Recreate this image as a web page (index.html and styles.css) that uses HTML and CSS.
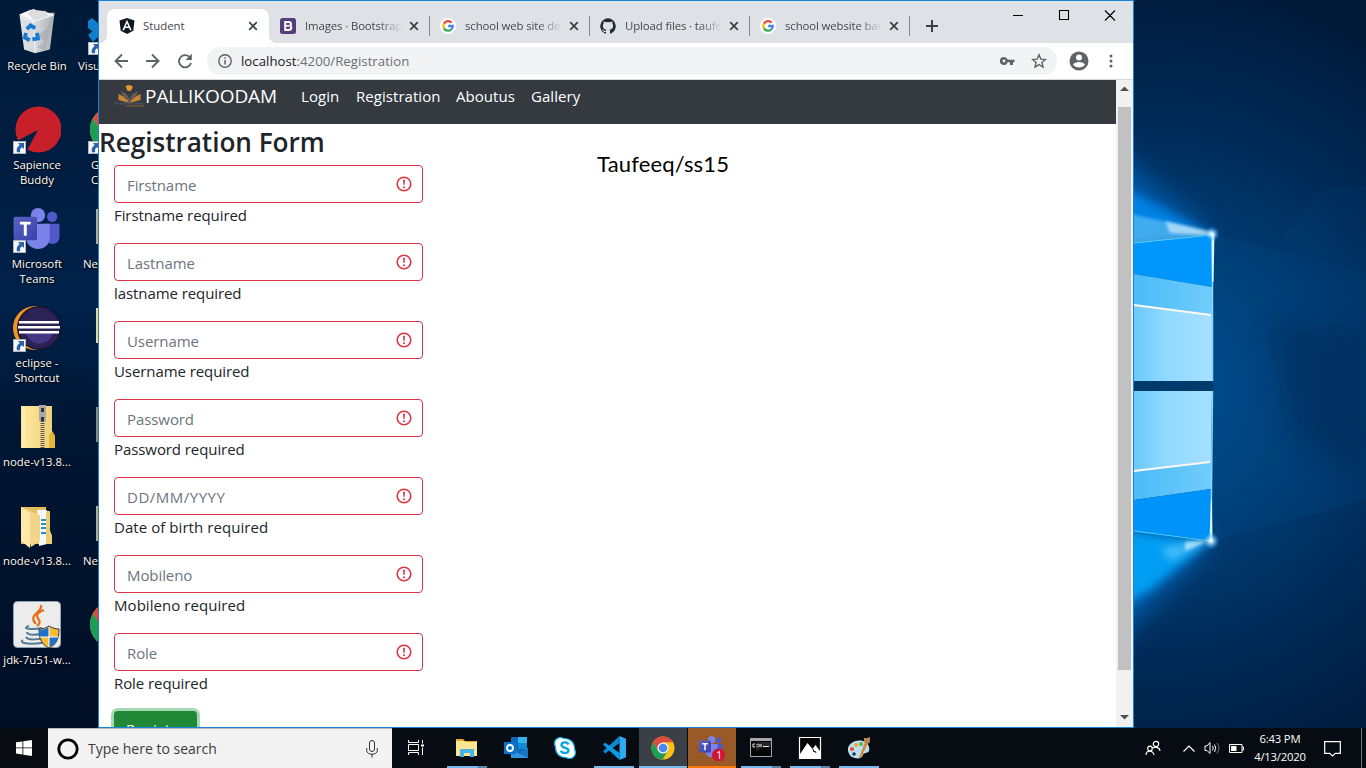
FILE: index.html
```html
<!DOCTYPE html>
<html lang="en">
<head>
<meta charset="utf-8">
<title>Student</title>
<link rel="stylesheet" href="styles.css">
</head>
<body>
<svg class="defs" width="0" height="0" aria-hidden="true">
  <defs>
    <linearGradient id="bin" x1="0" x2="1"><stop offset="0" stop-color="#e3e5e8"/><stop offset=".55" stop-color="#cfd2d6"/><stop offset="1" stop-color="#a8acb2"/></linearGradient>
    <linearGradient id="fold" x1="0" x2="1"><stop offset="0" stop-color="#ffe9a3"/><stop offset="1" stop-color="#efcf73"/></linearGradient>
    <linearGradient id="tm" x1="0" y1="0" x2="1" y2="1"><stop offset="0" stop-color="#5a62c3"/><stop offset="1" stop-color="#3940ab"/></linearGradient>
  </defs>
  <symbol id="shortcut" viewBox="0 0 13 13"><path d="M0 0h13v13H0z" fill="#aeb4bc"/><path d="M1 1h11v11H1z" fill="#f6f8fa"/><path d="M5 2h6v6L9 6.300C7 7.500 6.800 9 7.200 11.200H4C3 8.500 4 5.500 6.700 4z" fill="#2d62a8"/></symbol>
  <symbol id="vscode" viewBox="0 0 24 24"><path d="M1 15.200 17.500 0v7L3.200 17.500z" fill="#0f86d0"/><path d="M1 8.500 3.200 6.700 17.500 17v7z" fill="#0a9be6"/><path d="M17.500 0 24 2.800v18.400L17.500 24z" fill="#2babf3"/></symbol>
  <symbol id="chrome" viewBox="0 0 24 24"><circle cx="12" cy="12" r="11.500" fill="#fbc116"/><path d="M2 6.300A11.500 11.500 0 0 1 22 6.300H12L7 15z" fill="#dd4b3e"/><path d="M2 6.300A11.500 11.500 0 0 0 11.500 23.500L17 14.800 12 17 7 14.800z" fill="#1c9d58"/><circle cx="12" cy="12" r="5.600" fill="#f5f5f5"/><circle cx="12" cy="12" r="4.300" fill="#4688f1"/></symbol>
  <symbol id="google" viewBox="0 0 16 16"><circle cx="8" cy="8" r="8" fill="#fff"/><g fill="none" stroke-width="2.300"><path d="M4 5.600A4.700 4.700 0 0 1 11.500 4.600" stroke="#ea4335"/><path d="M4 5.600a4.700 4.700 0 0 0 0 4.800" stroke="#fbbc05"/><path d="M4 10.400a4.700 4.700 0 0 0 7.200 1.100" stroke="#34a853"/><path d="M11.200 11.500A4.600 4.600 0 0 0 12.700 8H8.200" stroke="#4285f4"/></g></symbol>
  <symbol id="teams" viewBox="0 0 48 44"><circle cx="39.500" cy="9" r="5.300" fill="#5059c9"/><path d="M32 16h15v13c0 9-9 9-12 6z" fill="#5059c9"/><circle cx="25" cy="7.300" r="7.300" fill="#7b83eb"/><path d="M13 16h24v14c0 16-24 16-24 0z" fill="#7b83eb"/><rect y="9" width="24" height="24" rx="2" fill="url(#tm)"/><path d="M6.500 14h11v3h-4v11.500h-3V17h-4z" fill="#fff"/></symbol>
  <symbol id="alert" viewBox="0 0 16 16"><circle cx="8" cy="8" r="6.800" fill="none" stroke="#dc3545" stroke-width="1.600"/><path d="M7 3.800h2l-.4 5.200H7.400z" fill="#dc3545"/><circle cx="8" cy="11.300" r="1" fill="#dc3545"/></symbol>
  <symbol id="close" viewBox="0 0 10 10"><path d="M1.200 1.200l7.600 7.600M8.800 1.200 1.200 8.800" stroke="#3c4043" stroke-width="1.700"/></symbol>
</svg>

<main class="desktop">
  <svg class="wallpaper" viewBox="0 0 1366 768">
    <defs>
      <radialGradient id="sky" gradientUnits="userSpaceOnUse" cx="1150" cy="390" r="480"><stop offset="0" stop-color="#004c90"/><stop offset=".3" stop-color="#003d74"/><stop offset=".55" stop-color="#002b58"/><stop offset=".85" stop-color="#001a3a"/><stop offset="1" stop-color="#001936"/></radialGradient>
      <linearGradient id="leftbg" x2="0" y2="1"><stop offset="0" stop-color="#001a38"/><stop offset=".4" stop-color="#00214a"/><stop offset=".55" stop-color="#001634"/><stop offset="1" stop-color="#000d22"/></linearGradient>
      <linearGradient id="pane" x2="1"><stop offset="0" stop-color="#6cc9fb"/><stop offset=".4" stop-color="#90d9ff"/><stop offset="1" stop-color="#a6e0ff"/></linearGradient>
      <linearGradient id="band" x2="1"><stop offset="0" stop-color="#4abcf8"/><stop offset="1" stop-color="#70ccfa"/></linearGradient>
      <radialGradient id="spark"><stop offset="0" stop-color="#fff"/><stop offset=".25" stop-color="#c8f1ff" stop-opacity=".8"/><stop offset="1" stop-color="#0a90ff" stop-opacity="0"/></radialGradient>
      <filter id="wide" x="-50%" y="-50%" width="200%" height="200%"><feGaussianBlur stdDeviation="14"/></filter>
      <filter id="soft" x="-30%" y="-30%" width="160%" height="160%"><feGaussianBlur stdDeviation="5"/></filter>
      <filter id="fine" x="-20%" y="-20%" width="140%" height="140%"><feGaussianBlur stdDeviation="1.800"/></filter>
    </defs>
    <rect width="1366" height="768" fill="url(#sky)"/>
    <rect width="110" height="768" fill="url(#leftbg)"/>
    <path d="M1212 234 1366 273V500L1212 541z" fill="#0063b0" opacity=".12"/>
    <path d="M1366 187h-40l-42 45v20l82 22z" fill="#0063b0" opacity=".07"/>
    <path d="M1270 320 1366 335V480L1290 430z" fill="#001f44" opacity=".35" filter="url(#wide)"/>
    <path d="M1090 130 1212 234 1090 260z" fill="#0070d0" opacity=".6" filter="url(#wide)"/>
    <path d="M1090 515 1211 541 1090 665z" fill="#0078d8" opacity=".7" filter="url(#wide)"/>
    <path d="M1100 175 1212 234 1100 250z" fill="#0090f8" opacity=".75" filter="url(#soft)"/>
    <path d="M1100 207 1212 232v5l-112 14z" fill="#8adfff" opacity=".45" filter="url(#fine)"/>
    <path d="M1165 221 1212 232v4l-42-3z" fill="#e2f5ff" opacity=".6" filter="url(#fine)"/>
    <path d="M1100 528 1211 541 1150 590 1100 620z" fill="#00a8ff" opacity=".85" filter="url(#soft)"/>
    <path d="M1160 549 1211 540l-40 20z" fill="#a6e6ff" opacity=".5" filter="url(#soft)"/>
    <path d="M1185 542 1211 540l-26 11z" fill="#d6f2ff" opacity=".7" filter="url(#fine)"/>
    <path d="M1134 243 1212 235V287L1134 274z" fill="#0096fb"/>
    <path d="M1134 274 1212 287V315L1134 305z" fill="url(#band)"/>
    <path d="M1134 305 1212 315V381H1134z" fill="url(#pane)"/>
    <path d="M1134 391H1212L1211 462 1134 471z" fill="url(#pane)"/>
    <path d="M1134 471 1211 462V489L1134 500z" fill="url(#band)"/>
    <path d="M1134 500 1211 489V540L1134 531z" fill="#0094fa"/>
    <path d="M1134 381h79v10h-79z" fill="#003b6c"/>
    <path d="M1134 305 1211 315M1134 471 1210 462" stroke="#fff8f0" stroke-width="2.200" fill="none"/>
    <path d="M1134 243 1212 235M1134 531 1211 541" stroke="#50ceff" stroke-width="1" fill="none"/>
    <path d="M1212.500 234V381M1212.500 391 1211 541" stroke="#82d8ff" stroke-width="1.500"/>
    <path d="M1211.500 234h3l-1 48h-1.500zM1209.500 541h3l-.5-42h-1z" fill="#dcf9ff"/>
    <circle cx="1212" cy="234" r="8" fill="url(#spark)"/><circle cx="1211" cy="541" r="9" fill="url(#spark)"/>
  </svg>

  <section class="icons">
    <div class="item"><svg class="pic" viewBox="-1 -2 50 52"><path d="M5 6 17 1l12 4 14-1-5 40-16 4-12-4z" fill="url(#bin)"/><path d="M5 6l15 7 23-7-14-4-11-1z" fill="#f8f8f8"/><path d="m14 5 6-5 6 3 7-1 4 7-16 4z" fill="#ddd"/><path d="M20 13l2 34M6 9l14 5 22-7" stroke="#f8f8f8" fill="none"/><path d="m24 29 11-8 4-8-6 32-9-3 8-7z" fill="#9fa4aa" opacity=".5"/><g fill="none" stroke="#167bd0" stroke-width="4.200"><path d="m13 22 4-4 5 3"/><path d="m12 26-1 5 5 3"/><path d="m19 33 6-1-1-6"/></g></svg><span>Recycle Bin</span></div>
    <div class="item"><svg class="pic" viewBox="0 0 48 48"><circle cx="25.500" cy="23.500" r="23" fill="#c8202a"/><path d="M25 24 4 35l9 11z" fill="#001f45"/><use href="#shortcut" y="35" width="13" height="13"/></svg><span>Sapience<br>Buddy</span></div>
    <div class="item"><svg class="pic" viewBox="0 0 48 48"><use href="#teams" y="3" width="48" height="43"/><use href="#shortcut" y="35" width="13" height="13"/></svg><span>Microsoft<br>Teams</span></div>
    <div class="item"><svg class="pic" viewBox="0 0 48 48"><circle cx="22" cy="24" r="22" fill="#f7941e"/><circle cx="26" cy="24" r="22" fill="#17152e"/><circle cx="26" cy="24" r="20.500" fill="#2c2255"/><path d="M13 29h27c-4 14-23 14-27 0z" fill="#463686"/><path d="M6 17h40v2.500H6zm-1 5h42v2.500H5zm1 5h40v2.500H6z" fill="#fff"/><use href="#shortcut" y="35" width="13" height="13"/></svg><span>eclipse -<br>Shortcut</span></div>
    <div class="item"><svg class="pic" viewBox="0 0 48 48"><path d="M8 3h31v25l3 5v12H8z" fill="url(#fold)"/><path d="M36 45V32l3-4 3 5v12z" fill="#e3b63a"/><path d="M11 4v40" stroke="#fff4c9"/><path d="M29.500 14v31" stroke="#555" stroke-width="4" stroke-dasharray="1 1"/><path d="M26 2h7v16h-7z" fill="#a8a8a8"/><path d="M28 5h3v4h-3zM28 14h3v4h-3z" fill="#333"/></svg><span>node-v13.8...</span></div>
    <div class="item"><svg class="pic" viewBox="0 0 48 48"><path d="M8 5h25v4h4v20l2 5v8H8z" fill="#e3be5c"/><path d="M24 8h10v34l-8 2z" fill="#f5f8fc"/><path d="M28 18h5m-5 4h6m-6 4h5m-5 5h5" stroke="#278fcf" stroke-width="2"/><path d="M33 9h4v20l2 5v8h-6z" fill="#edcc76"/><path d="M8 5l19 8v26l-9 6z" fill="#f3d589"/><path d="M8 5l9 6v35l-9-7z" fill="#ffe8a8"/></svg><span>node-v13.8...</span></div>
    <div class="item"><svg class="pic" viewBox="0 0 48 48"><rect x=".5" y=".5" width="47" height="46" rx="4" fill="#ececec" stroke="#8ca2b6"/><path d="M28 4c2 8-14 9-5 19m8-14c-10 4-7 7-5 10s-1 5-2 6" stroke="#e76f1a" stroke-width="2.300" fill="none"/><path d="M16 25c-9 3 4 4 13 2M14 31c0 4 12 3 16 1M13 36c2 4 14 2 18 1M10 39c-8 5 24 5 23 0" stroke="#527b96" stroke-width="2" fill="none"/><path d="M26 28c4 0 7-1 10-3 3 2 7 3 10 3 0 10-3 16-10 19-7-3-10-9-10-19z" fill="#f6bb32" stroke="#33383e"/><path d="M36 26v10h-9c-1-2-1-5-1-7 4 0 7-1 10-3zM36 36h9c-1 5-4 8-9 10z" fill="#1e70c9"/><path d="M36 26v20M27 36h18" stroke="#fff"/></svg><span>jdk-7u51-w...</span></div>
  </section>
  <section class="icons second">
    <div class="item"><svg class="pic" viewBox="0 0 48 48"><path d="M0 14 4 11 20 25V36L0 21zM0 28l20-17v9L5 35z" fill="#1080cc"/><use href="#shortcut" y="35" width="13" height="13"/></svg><span class="n1">Visu</span></div>
    <div class="item"><svg class="pic" viewBox="0 0 48 48"><use href="#chrome" x="1" y="0" width="47" height="47"/><use href="#shortcut" y="35" width="13" height="13"/></svg><span class="n2">G<br>C</span></div>
    <div class="item"><svg class="pic" viewBox="0 0 48 48"><path d="M8 4h30v35H8z" fill="#b9ad85"/></svg><span class="n3">Ne</span></div>
    <div class="item"><svg class="pic" viewBox="0 0 48 48"><path d="M8 4h30v35H8z" fill="#efd58b"/></svg></div>
    <div class="item"><svg class="pic" viewBox="0 0 48 48"><path d="M8 4h30v35H8z" fill="#8b8873"/></svg></div>
    <div class="item"><svg class="pic" viewBox="0 0 48 48"><path d="M8 4h30v35H8z" fill="#b8ad82"/></svg><span class="n3">Ne</span></div>
    <div class="item"><svg class="pic" viewBox="0 0 48 48"><use href="#chrome" x="1" width="47" height="47"/></svg></div>
  </section>

  <section class="window">
    <header class="tabs">
      <div class="tab active"><svg class="fav" viewBox="0 0 16 16"><path d="M8 0 15.500 2.600 14.300 12.700 8 16 1.700 12.700.5 2.600z" fill="#101820"/><path d="M8 1.700 3.300 12.300h1.800l1-2.400h3.900l1 2.400h1.700zm0 3.500 1.400 3.200H6.600z" fill="#fff"/></svg><span>Student</span><svg class="x"><use href="#close"/></svg></div>
      <div class="tab"><svg class="fav" viewBox="0 0 16 16"><rect width="16" height="16" rx="2.500" fill="#563d7c"/><path d="M5.200 4h3.400c3 0 3 3.300 1 3.700 2.600.5 2.200 4.300-1 4.300H5.200z" fill="none" stroke="#fff" stroke-width="2"/><path d="M5 7.800h4" stroke="#fff" stroke-width="1.700"/></svg><span class="fade">Images · Bootstrap</span><svg class="x"><use href="#close"/></svg></div>
      <div class="tab"><svg class="fav"><use href="#google"/></svg><span class="fade">school web site de</span><svg class="x"><use href="#close"/></svg></div>
      <div class="tab"><svg class="fav" viewBox="0 0 16 16"><path d="M8 .2a8 8 0 0 0-2.500 15.500c.4.100.500-.2.500-.4v-1.400c-2.200.5-2.700-1-2.700-1-.4-.9-.9-1.200-.9-1.200-.7-.5.1-.5.100-.5.800.1 1.200.8 1.200.8.700 1.200 1.900.9 2.300.7.100-.5.300-.9.500-1.100-1.800-.2-3.600-.9-3.600-3.900 0-.9.300-1.600.8-2.200-.1-.2-.4-1 .1-2.100 0 0 .7-.2 2.200.8a7.500 7.500 0 0 1 4 0c1.500-1 2.200-.8 2.200-.8.500 1.100.2 1.900.1 2.100.5.600.8 1.300.8 2.200 0 3-1.900 3.700-3.600 3.900.3.300.5.800.5 1.500v2.200c0 .2.100.5.500.4A8 8 0 0 0 8 .2z" fill="#24292e"/></svg><span class="fade">Upload files · taufe</span><svg class="x"><use href="#close"/></svg></div>
      <div class="tab"><svg class="fav"><use href="#google"/></svg><span class="fade">school website bac</span><svg class="x"><use href="#close"/></svg></div>
      <svg class="plus" viewBox="0 0 12 12"><path d="M6 0v12M0 6h12" stroke="#3c4043" stroke-width="2"/></svg>
      <svg class="controls" viewBox="0 0 138 30"><path d="M17 15.500h10M63.500 10.500h9v9h-9zM109 10.500l10 10M119 10.500l-10 10" fill="none" stroke="#000" stroke-width="1.100"/></svg>
    </header>
    <div class="toolbar">
      <svg class="nav" viewBox="0 0 78 16" fill="none" stroke="#5f6368" stroke-width="1.900"><path d="M14 8H1.500M8 1.500 1.500 8 8 14.500M32 8h12.500M38 1.500 44.500 8 38 14.500"/><path d="M76 4.500A6.100 6.100 0 1 0 77 10"/><path d="M77.800.8V7h-6.300z" fill="#5f6368" stroke="none"/></svg>
      <div class="omnibox">
        <svg class="info" viewBox="0 0 14 14"><circle cx="7" cy="7" r="6.200" fill="none" stroke="#5f6368" stroke-width="1.400"/><path d="M6.300 6h1.500v4.500H6.300zM6.300 3.300h1.500v1.500H6.300z" fill="#5f6368"/></svg>
        <span class="url"><b>localhost</b>:4200/Registration</span>
        <svg class="key" viewBox="0 0 15 8"><path d="M4 0a4 4 0 1 0 3.700 5.300H10V8h3V5.300h1.500V2.700H7.700A4 4 0 0 0 4 0zm0 2.600a1.400 1.400 0 1 1 0 2.800 1.400 1.400 0 0 1 0-2.800z" fill="#5f6368"/></svg>
        <svg class="star" viewBox="0 0 16 16"><path d="m8 1.800 1.900 4.300 4.500.4-3.400 3 1 4.500-4-2.400L4 14l1-4.500-3.400-3 4.500-.4z" fill="none" stroke="#5f6368" stroke-width="1.400"/></svg>
      </div>
      <svg class="user" viewBox="0 0 20 20"><circle cx="10" cy="10" r="9.500" fill="#5f6368"/><circle cx="10" cy="6.500" r="3" fill="#fff"/><path d="M4 13.500c2-3.500 10-3.500 12 0-2.500 4-9.500 4-12 0z" fill="#fff"/></svg>
      <svg class="dots" viewBox="0 0 4 14"><circle cx="2" cy="2" r="1.500"/><circle cx="2" cy="7" r="1.500"/><circle cx="2" cy="12" r="1.500"/></svg>
    </div>
    <div class="viewport">
      <div class="page">
        <nav class="navbar">
          <svg class="logo" viewBox="0 0 30 24"><path d="M11 2l3-1 4 1v2l-2 3h-3z" fill="#e8962e"/><path d="M4 10l8 4 3 5-11-3zM26 10l-8 4-3 5 11-3z" fill="#c98635"/><path d="M6 7l6 3 3 5 3-5 6-3-3 6-6 5-6-5z" fill="#665c51"/><path d="M0 19.500h30" stroke="#4d5359" stroke-width="2" stroke-dasharray="2 .7"/><path d="M11 22h19" stroke="#835c32" stroke-width="1.500" stroke-dasharray="2 .6"/></svg>
          <span class="brand">PALLIKOODAM</span>
          <a class="l1">Login</a><a class="l2">Registration</a><a class="l3">Aboutus</a><a class="l4">Gallery</a>
        </nav>
        <h3>Registration Form</h3>
        <form class="form">
          <div class="group"><div class="input">Firstname<svg><use href="#alert"/></svg></div><p>Firstname required</p></div>
          <div class="group"><div class="input">Lastname<svg><use href="#alert"/></svg></div><p>lastname required</p></div>
          <div class="group"><div class="input">Username<svg><use href="#alert"/></svg></div><p>Username required</p></div>
          <div class="group"><div class="input">Password<svg><use href="#alert"/></svg></div><p>Password required</p></div>
          <div class="group"><div class="input date-input">DD/MM/YYYY<svg><use href="#alert"/></svg></div><p class="wider">Date of birth required</p></div>
          <div class="group"><div class="input">Mobileno<svg><use href="#alert"/></svg></div><p class="wider">Mobileno required</p></div>
          <div class="group"><div class="input">Role<svg><use href="#alert"/></svg></div><p>Role required</p></div>
          <div class="register">Register</div>
        </form>
        <span class="note">Taufeeq/ss15</span>
      </div>
      <div class="scrollbar"><svg viewBox="0 0 9 5"><path d="M0 5 4.500.5 9 5z"/></svg><i></i><svg viewBox="0 0 9 5"><path d="M0 0 4.500 4.500 9 0z"/></svg></div>
    </div>
  </section>

  <footer class="taskbar">
    <div class="start"><svg viewBox="0 0 16 16"><path d="M0 2.300 6.500 1.400v6.100H0zM7.300 1.300 16 0v7.500H7.300zM0 8.300h6.500v6.200L0 13.600zM7.300 8.300H16V16l-8.700-1.300z" fill="#fff"/></svg></div>
    <div class="search"><svg class="ring" viewBox="0 0 22 22"><circle cx="11" cy="11" r="9.200" fill="none" stroke="#000" stroke-width="2.800"/></svg><span>Type here to search</span><svg class="mic" viewBox="0 0 12 18" fill="none" stroke="#333"><rect x="3.500" y=".5" width="5" height="11" rx="2.500"/><path d="M.7 8v2.500c0 5 10.600 5 10.600 0V8M6 14v3.500"/></svg></div>
    <div class="task view"><svg class="i18" viewBox="0 0 18 18" fill="none" stroke="#fff"><path d="M1.500 1v2.500h10V1M1.500 5.500h10v6h-10zM1.500 16v-2.500h10V16M15.500 1v15"/><path d="M13.500 5h4v3h-4z" fill="#fff" stroke="#070b10"/></svg></div>
    <div class="task open multi"><svg class="i24" viewBox="0 0 24 24"><path d="M1 4V3h7l2 2h12v2H1z" fill="#e7a928"/><path d="M1 5h8l1 1h12v14H1z" fill="#ffe592"/><path d="M5 21v-8h14v8h-4v-4H9v4z" fill="#43b6e6"/></svg></div>
    <div class="task"><svg class="i24" viewBox="0 0 24 24"><path d="M7 1h16v15H7z" fill="#1068b7"/><path d="M14 1h9v6h-9z" fill="#32b4ef"/><path d="M14 7h9v6h-9z" fill="#138bd3"/><path d="M7 22V12l8 5 9-5v10z" fill="#3095df"/><path d="M14 17l10-5v10z" fill="#1b73c3"/><rect y="6" width="12" height="12" fill="#0872cb"/><circle cx="6" cy="12" r="3" fill="none" stroke="#fff" stroke-width="1.800"/></svg></div>
    <div class="task"><svg class="i24" viewBox="0 0 24 24"><g fill="#fff" stroke="#00aff0" stroke-width="1.200"><circle cx="7.500" cy="7.500" r="6"/><circle cx="16.500" cy="16.500" r="6"/><circle cx="12" cy="12" r="9.500"/></g><circle cx="8" cy="8" r="5.500" fill="#fff"/><circle cx="16" cy="16" r="5.500" fill="#fff"/><path d="M15.500 8.500c-1-2.800-7-2.800-7 .5 0 3.500 7 2.300 7 5.500 0 3.500-7 3-7.500.3" fill="none" stroke="#00a5e7" stroke-width="2.300"/></svg></div>
    <div class="task open"><svg class="i24"><use href="#vscode"/></svg></div>
    <div class="task open focused"><svg class="i24"><use href="#chrome"/></svg></div>
    <div class="task open attention"><svg class="i26" viewBox="0 0 26 26"><use href="#teams" y="1" width="24" height="22"/><circle cx="19.500" cy="20" r="6.500" fill="#d41035"/></svg><em>1</em></div>
    <div class="task open multi"><svg class="i24" viewBox="0 0 24 24"><path d="M1 2h22v19H1z" fill="#a6a6a6"/><path d="M2 5h20v15H2z" fill="#050505"/><path d="M7 6h15v5c-7 0-11 1-15 4z" fill="#262626"/><path d="M4 8h2M4 8v3h2M8 8v1m0 1v1M10 8v3m2-3v3M14 10.500h6" stroke="#eee" fill="none"/></svg></div>
    <div class="task open multi"><svg class="i24" viewBox="0 0 24 24"><path d="M1.500 1.500h21v21h-21z" fill="#050505" stroke="#fff" stroke-width="1.200"/><path d="M2 18 9.500 7l5 6 3-4L22 15v7H2z" fill="#fff"/><path d="m15 13 1 3 1-1 1 2" stroke="#111" fill="none"/></svg></div>
    <div class="task open"><svg class="i24" viewBox="0 0 24 24"><path d="M1 15C0 8 8 3 16 5c6 2 7 7 6 10-2 3-5 1-6 4s-4 4-8 3c-5-1-6-4-7-7z" fill="#b9dff0"/><circle cx="5" cy="13" r="2" fill="#e34a38"/><circle cx="9" cy="9" r="2" fill="#f2a623"/><circle cx="14" cy="8" r="2" fill="#57b947"/><circle cx="7" cy="18" r="1.800" fill="#16395a"/><path d="m12 22 6-16 3 1-7 15z" fill="#d88932"/><path d="m17 6 0-4 3 0 3-1v5l-2 2z" fill="#b98456"/></svg></div>
    <div class="tray">
      <svg class="people" viewBox="0 0 16 16" fill="none" stroke="#fff" stroke-width="1.200"><circle cx="11" cy="4" r="2.700"/><circle cx="5" cy="8.500" r="2.300"/><path d="M1 15c0-5 7-5 8 0M8 8c3-2 7 0 7 3"/></svg>
      <svg class="chev" viewBox="0 0 12 7"><path d="M.5 6.500 6 1l5.500 5.500" fill="none" stroke="#fff" stroke-width="1.200"/></svg>
      <svg class="sound" viewBox="0 0 17 14" fill="none" stroke="#fff"><path d="M1 5h2l3-3.500v11L3 9.500H1zM8.500 5q1.500 2 0 4.500M10.500 3.500q2.500 3.500 0 7.500"/><path d="M13 2q4 5 0 10.500" stroke="#777"/></svg>
      <svg class="battery" viewBox="0 0 15 9"><path d="M.5.500h12.500v8H.5zM13 3h1.500v3H13" fill="none" stroke="#fff"/><path d="M2 2h5.500v5H2z" fill="#fff"/></svg>
      <div class="clock"><span>6:43 PM</span><span class="date">4/13/2020</span></div>
      <svg class="bubble" viewBox="0 0 17 17"><path d="M.7 1.700h15.600v11.600h-5L8.500 16l-2.800-2.700h-5z" fill="none" stroke="#fff" stroke-width="1.200"/></svg>
      <i class="peek"></i>
    </div>
  </footer>
</main>
</body>
</html>
```

FILE: styles.css
```css
* { box-sizing: border-box; }
body { margin: 0; overflow: hidden; font-family: "Open Sans", "Noto Sans", sans-serif; }
svg { display: block; flex: none; }
.defs { position: absolute; }
.desktop { position: relative; width: 1366px; height: 768px; overflow: hidden; background: #001936; }
.wallpaper { position: absolute; inset: 0; }

.icons { position: absolute; left: 0; top: 0; width: 74px; padding-top: 7px; display: flex; flex-direction: column; }
.icons.second { left: 75px; }
.item { height: 99px; display: flex; flex-direction: column; align-items: center; gap: 3px; color: #fff; font-size: 11.4px; line-height: 15px; letter-spacing: 0; text-align: center; text-shadow: 1px 1px 2px #000, 0 0 1px #000; white-space: nowrap; }
.pic { width: 48px; height: 48px; }
.second .item { align-items: flex-start; text-align: left; }
.second .pic { margin-left: 13px; }
.n1 { padding-left: 3px; }
.n2 { padding-left: 16px; }
.n3 { padding-left: 8px; }

.window { position: absolute; left: 98px; top: 0; width: 1036px; height: 728px; border: 1px solid #1883d7; background: #fff; display: flex; flex-direction: column; }
.tabs { height: 42px; background: #dee1e6; display: flex; align-items: flex-end; padding-left: 8px; position: relative; flex: none; }
.tab { width: 160px; height: 34px; display: flex; align-items: center; padding-left: 11px; font-size: 11.4px; color: #45484c; position: relative; }
.tab:not(.active)::after { content: ""; position: absolute; right: -1px; top: 7px; width: 1px; height: 20px; background: #85898e; }
.tab.active { width: 162px; background: #fff; border-radius: 8px 8px 0 0; padding-left: 12px; }
.tab.active::before, .tab.active::after { content: ""; position: absolute; bottom: 0; width: 8px; height: 8px; }
.tab.active::before { left: -8px; background: radial-gradient(circle at 0 0, transparent 8px, #fff 8.500px); }
.tab.active::after { right: -8px; background: radial-gradient(circle at 100% 0, transparent 8px, #fff 8.500px); }
.fav { width: 16px; height: 16px; margin-right: 8px; }
.tab span { width: 98px; white-space: nowrap; letter-spacing: -.02px; padding-bottom: 2px; }
.tab .fade { letter-spacing: -.12px; padding-left: 1px; mask-image: linear-gradient(90deg, #000 76%, transparent); }
.tab.active span { width: 105px; }
.x { width: 10px; height: 10px; margin-left: 7px; }
.tab.active .x { margin-left: 0; }
.plus { width: 12px; height: 12px; margin: 0 0 11px 17px; }
.controls { width: 138px; height: 30px; margin-left: auto; align-self: flex-start; position: relative; top: -1px; margin-right: -1px; }

.toolbar { height: 37px; flex: none; border-bottom: 1px solid #d5d7da; display: flex; align-items: center; padding-left: 15px; }
.nav { width: 78px; height: 16px; }
.omnibox { width: 850px; height: 28px; margin-left: 15px; border-radius: 14px; background: #f1f3f4; display: flex; align-items: center; padding: 0 10px 0 11px; }
.info { width: 14px; height: 14px; }
.url { margin-left: 9px; font-size: 13.2px; color: #6b6f73; letter-spacing: .03px; flex: 1; }
.url b { font-weight: 400; color: #202124; }
.key { width: 15px; height: 8px; margin-right: 16px; }
.star { width: 16px; height: 16px; }
.user { width: 20px; height: 20px; margin-left: 12px; }
.dots { width: 4px; height: 14px; margin-left: 20px; fill: #5f6368; }

.viewport { display: flex; flex: 1; min-height: 0; overflow: hidden; }
.page { width: 1017px; position: relative; color: #212529; overflow: hidden; }
.navbar { height: 44px; background: #343a40; display: flex; align-items: flex-start; padding: 4px 0 0 15px; color: #fff; font-size: 15px; line-height: 25px; white-space: nowrap; }
.logo { width: 31px; height: 24px; }
.brand { width: 132px; font-size: 19px; letter-spacing: -.05px; margin-right: 24px; }
.navbar a { color: #fff; margin-right: -1px; letter-spacing: .05px; }
.l1 { width: 56px; } .l2 { width: 101px; } .l3 { width: 76px; }
h3 { margin: 0; height: 41px; line-height: 37px; font-size: 26.200px; font-weight: 600; letter-spacing: -.05px; white-space: nowrap; }
.form { margin: 0 0 0 15px; width: 309px; font-size: 15px; line-height: 24px; letter-spacing: -.08px; }
.group { height: 78px; }
.input { height: 38px; border: 1px solid #dc3545; border-radius: 4px; padding: 2px 10px 0 12px; display: flex; align-items: center; justify-content: space-between; color: #6c757d; }
.date-input { letter-spacing: .5px; }
.input svg { width: 16px; height: 16px; margin-top: -3px; }
.group p { margin: 0; line-height: 25px; }
.group .wider { letter-spacing: .06px; }
.register { width: 83px; height: 38px; border-radius: 4px; background: #218838; box-shadow: 0 0 0 3px #a6d8b1; color: #fff; padding: 6px 12px; letter-spacing: .4px; }
.note { position: absolute; left: 498px; top: 69px; font: 22px/30px Lato, sans-serif; letter-spacing: .15px; color: #000; }
.scrollbar { width: 17px; background: #f1f1f1; display: flex; flex-direction: column; align-items: center; padding: 6px 0 7px; fill: #505050; }
.scrollbar svg { width: 9px; height: 5px; }
.scrollbar i { width: 13px; height: 563px; margin: 16px 0 auto; background: #c1c1c1; }

.taskbar { position: absolute; left: 0; top: 728px; width: 1366px; height: 40px; background: #070b12; display: flex; color: #fff; }
.start { width: 48px; display: grid; place-items: center; }
.start svg { width: 16px; height: 16px; }
.search { width: 344px; background: #f2f2f2; border-top: 1px solid #b8b8b8; display: flex; align-items: center; padding: 0 14px 0 9px; color: #3b3b3b; font-size: 14px; }
.ring { width: 22px; height: 22px; margin-right: 9px; }
.search span { flex: 1; }
.mic { width: 12px; height: 18px; }
.task { width: 48px; margin-right: 1px; height: 40px; position: relative; display: grid; place-items: center; }
.task.view { margin-right: 3px; }
.i18 { width: 18px; height: 18px; }
.i24 { width: 24px; height: 24px; }
.i26 { width: 26px; height: 26px; }
.task.open::after { content: ""; position: absolute; bottom: 0; left: 4px; width: 40px; height: 2px; background: #76b9ed; }
.task.multi::after { background: linear-gradient(90deg, #76b9ed 31px, #41637f 31px, #5b87aa 32px); }
.task.focused { background: #3b4046; }
.task.focused::after, .task.attention::after { left: 0; width: 48px; }
.task.attention { background: #9a5a28; }
.task.attention::after { background: #ff7800; }
.task em { position: absolute; left: 28px; top: 19px; font: 11px/16px "Open Sans", sans-serif; }
.tray { margin-left: auto; display: flex; align-items: center; }
.people { width: 16px; height: 16px; margin-right: 22px; }
.chev { width: 12px; height: 7px; margin-right: 9px; }
.sound { width: 17px; height: 14px; margin-right: 8px; }
.battery { width: 15px; height: 9px; }
.clock { width: 68px; margin: 0 10px 0 2px; display: flex; flex-direction: column; align-items: center; font-size: 11.3px; line-height: 18px; letter-spacing: -.2px; }
.bubble { width: 17px; height: 17px; }
.peek { width: 1px; height: 40px; background: #70757a; margin: 0 4px 0 20px; }
```
